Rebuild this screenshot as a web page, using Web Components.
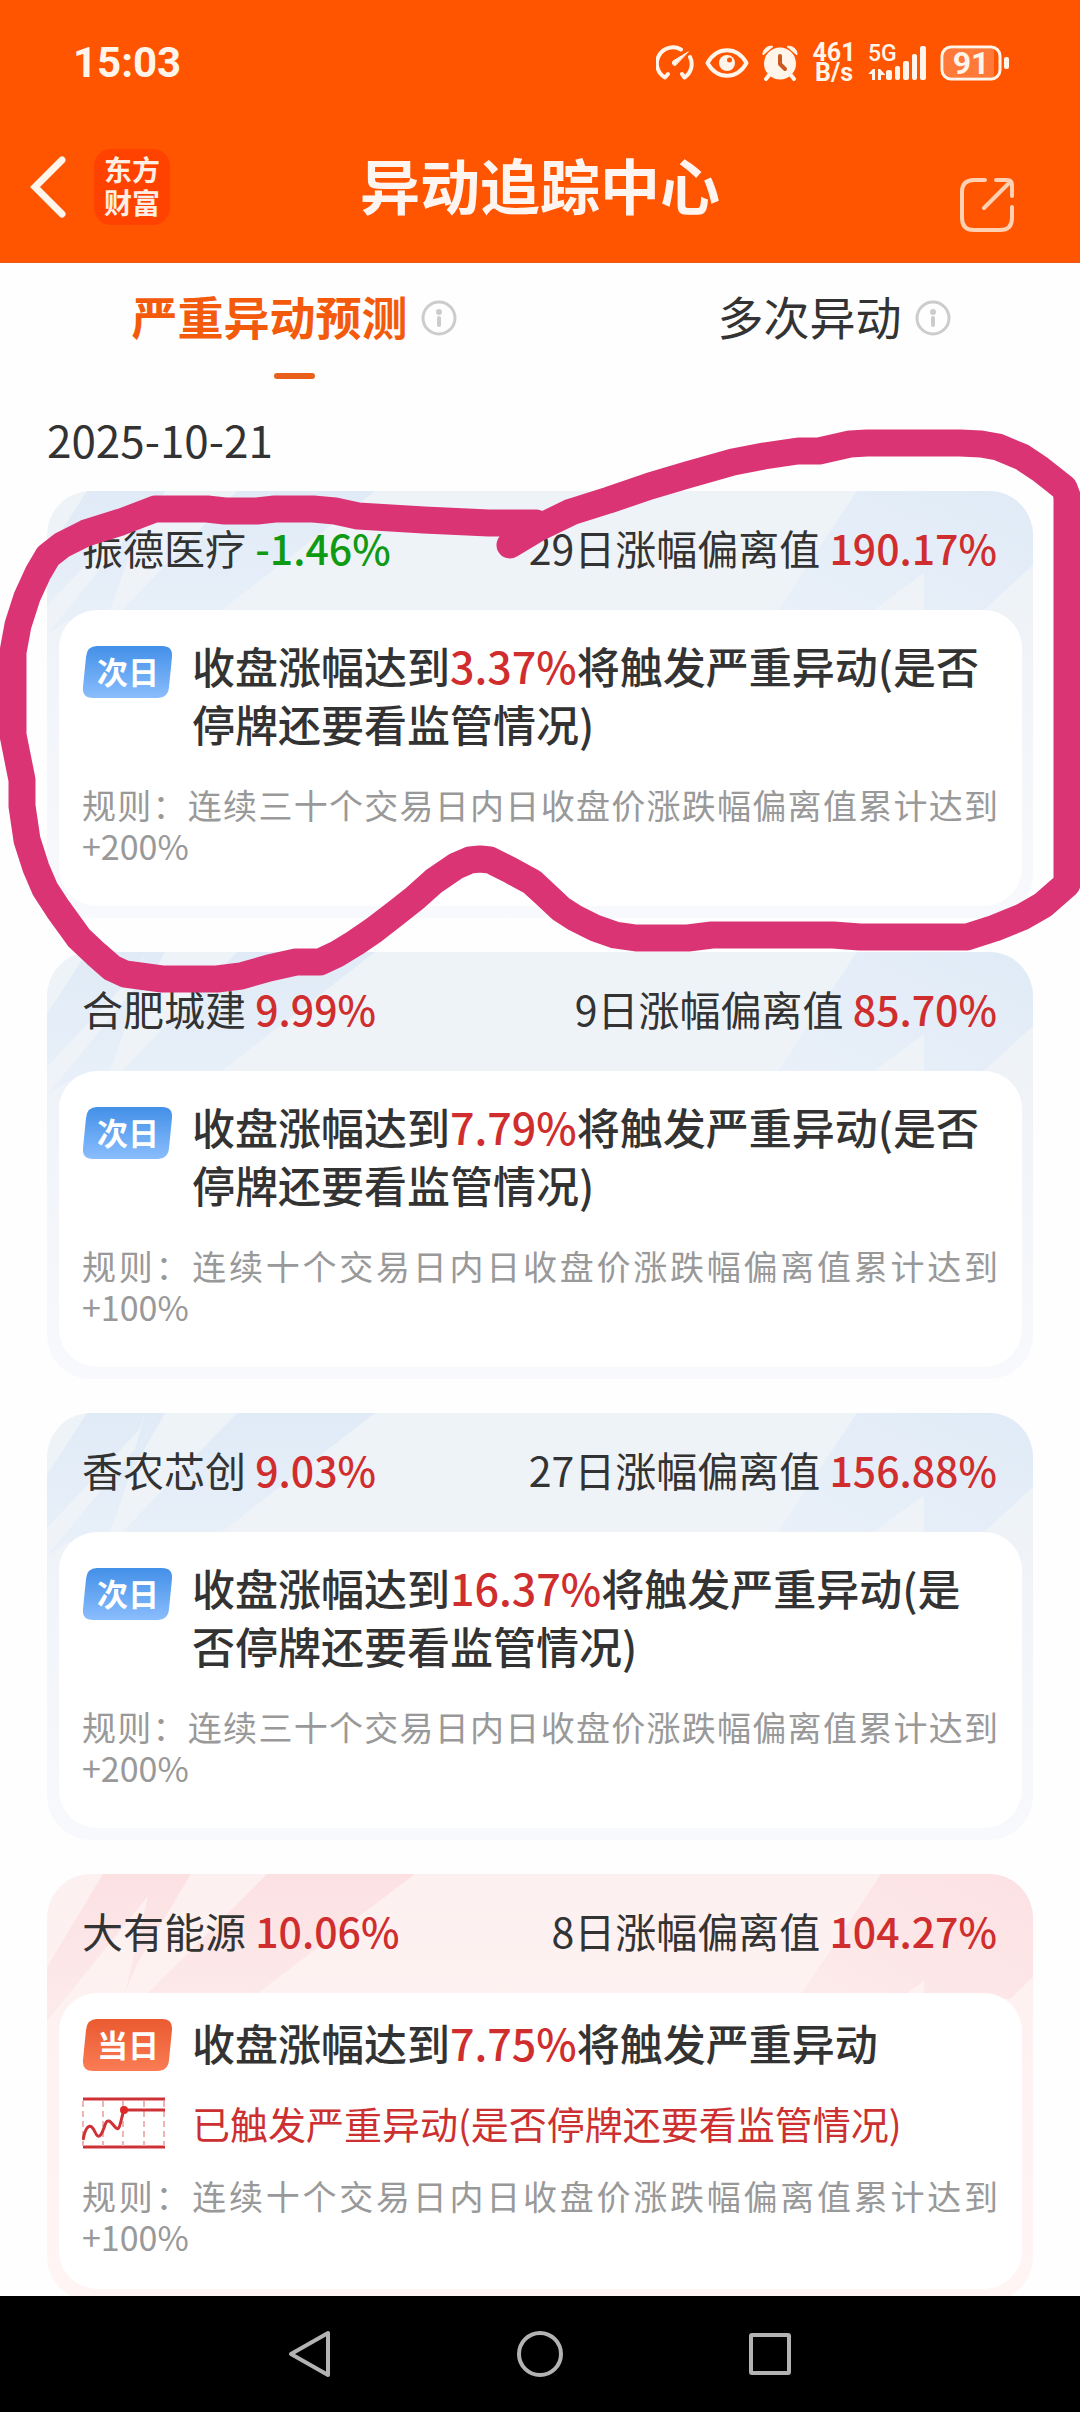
<!DOCTYPE html>
<html lang="zh-CN">
<head>
<meta charset="utf-8">
<meta name="viewport" content="width=device-width">
<title>异动追踪中心</title>
<style>
body { margin: 0; background: #fefefe; color: #333; font-family: "Noto Sans CJK SC", sans-serif; }
</style>
</head>
<body>
<app-screen>
  <status-bar slot="top"></status-bar>
  <title-bar slot="top">异动追踪中心</title-bar>
  <tab-strip>
    <tab-item selected>严重异动预测</tab-item>
    <tab-item>多次异动</tab-item>
  </tab-strip>
  <alert-list date="2025-10-21">
    <stock-alert>
      <span slot="name">振德医疗 <rate-value trend="down">-1.46%</rate-value></span>
      <span slot="deviation">29日涨幅偏离值 <rate-value>190.17%</rate-value></span>
      <day-badge slot="badge">次日</day-badge>
      <span slot="headline">收盘涨幅达到<rate-value>3.37%</rate-value>将触发严重异动(是否停牌还要看监管情况)</span>
      规则：连续三十个交易日内日收盘价涨跌幅偏离值累计达到+200%
    </stock-alert>
    <stock-alert>
      <span slot="name">合肥城建 <rate-value>9.99%</rate-value></span>
      <span slot="deviation">9日涨幅偏离值 <rate-value>85.70%</rate-value></span>
      <day-badge slot="badge">次日</day-badge>
      <span slot="headline">收盘涨幅达到<rate-value>7.79%</rate-value>将触发严重异动(是否停牌还要看监管情况)</span>
      规则：连续十个交易日内日收盘价涨跌幅偏离值累计达到+100%
    </stock-alert>
    <stock-alert>
      <span slot="name">香农芯创 <rate-value>9.03%</rate-value></span>
      <span slot="deviation">27日涨幅偏离值 <rate-value>156.88%</rate-value></span>
      <day-badge slot="badge">次日</day-badge>
      <span slot="headline">收盘涨幅达到<rate-value>16.37%</rate-value>将触发严重异动(是否停牌还要看监管情况)</span>
      规则：连续三十个交易日内日收盘价涨跌幅偏离值累计达到+200%
    </stock-alert>
    <stock-alert triggered>
      <span slot="name">大有能源 <rate-value>10.06%</rate-value></span>
      <span slot="deviation">8日涨幅偏离值 <rate-value>104.27%</rate-value></span>
      <day-badge slot="badge" today>当日</day-badge>
      <span slot="headline">收盘涨幅达到<rate-value>7.75%</rate-value>将触发严重异动</span>
      <span slot="notice">已触发严重异动(是否停牌还要看监管情况)</span>
      规则：连续十个交易日内日收盘价涨跌幅偏离值累计达到+100%
    </stock-alert>
  </alert-list>
  <pen-mark slot="overlay"></pen-mark>
  <system-nav slot="bottom"></system-nav>
</app-screen>

<script>
const BASE = `<style>
  :host { display: block; }
  *, :host { box-sizing: border-box; }
  button { margin: 0; padding: 0; border: 0; background: none; color: inherit; font: inherit; cursor: pointer; }
  svg { display: block; }
</style>`;

function component(name, render) {
  customElements.define(name, class extends HTMLElement {
    constructor() {
      super();
      this.attachShadow({ mode: 'open' });
    }
    connectedCallback() {
      this.shadowRoot.innerHTML = BASE + render(this);
    }
  });
}

component('app-screen', () => `<style>
  :host { position: relative; display: flex; flex-direction: column; height: 100vh; overflow: hidden; }
  main { flex: 1; min-height: 0; overflow: hidden; }
</style>
<slot name="top"></slot><main><slot></slot></main><slot name="overlay"></slot><slot name="bottom"></slot>`);

component('status-bar', () => `<style>
  :host { display: flex; align-items: center; justify-content: space-between; height: 126px; padding: 0 70px 0 73px; background: #ff5500; color: #fff5ea; font-family: Roboto, sans-serif; font-weight: 700; }
  time { font-size: 42px; line-height: 48px; }
  .icons { display: flex; align-items: center; height: 40px; }
  .speed { width: 44px; margin: 0 12px 0 14px; font-size: 25px; line-height: 20px; text-align: center; }
  .cell { display: grid; margin-right: 12px; }
  .cell > * { grid-area: 1 / 1; }
  .cell span { font-size: 23px; line-height: 18px; font-weight: 500; }
  .battery { display: grid; }
  .battery > * { grid-area: 1 / 1; }
  .battery span { width: 62px; text-align: center; font-size: 32px; line-height: 36px; }
  .eye { margin: 0 13px 0 11px; }
</style>
<time>15:03</time>
<div class="icons">
  <svg width="38" height="36" viewBox="0 0 38 36" fill="none" stroke="#fff5ea" stroke-width="4" stroke-linecap="round" stroke-linejoin="round">
    <path d="M25 4.500A16 16 0 0 0 9 32.500L12 29M34 12A16 16 0 0 1 28.500 32.500L26 29"/>
    <path d="M32 7L17 16Q15 20 19 20.500Z" fill="#fff5ea" stroke-width="1"/>
  </svg>
  <svg class="eye" width="44" height="32" viewBox="0 0 44 32">
    <path d="M2.500 16C12-1 32-1 41.500 16C32 33 12 33 2.500 16Z" fill="none" stroke="#fff5ea" stroke-width="4" stroke-linejoin="round"/>
    <circle cx="22" cy="16" r="8" fill="#fff5ea"/><circle cx="24.500" cy="13" r="2.500" fill="#ff5500"/>
  </svg>
  <svg width="36" height="36" viewBox="0 0 36 36">
    <path d="M1 10A8 8 0 0 1 11 1.500ZM35 10A8 8 0 0 0 25 1.500Z" fill="#fff5ea" stroke="#fff5ea" stroke-width="1" stroke-linejoin="round"/>
    <circle cx="18" cy="18.500" r="17" fill="#ff5500"/><circle cx="18" cy="18.500" r="16" fill="#fff5ea"/>
    <path d="M8 29L4 34M28 29L32 34" stroke="#fff5ea" stroke-width="4" stroke-linecap="round"/>
    <path d="M18 11V19L23 24" fill="none" stroke="#c85a20" stroke-width="4" stroke-linecap="round" stroke-linejoin="round"/>
  </svg>
  <div class="speed">461<br>B/s</div>
  <div class="cell">
    <span>5G</span>
    <svg width="60" height="36" viewBox="0 0 60 36" fill="#fff5ea">
      <path d="M0 29L5 24H7V35H4V29ZM10 24H12L17 29.500V30H13V35H10Z"/>
      <rect x="18" y="25" width="6" height="10" rx="2"/><rect x="27" y="21" width="5" height="14" rx="2"/><rect x="35" y="16" width="6" height="19" rx="2"/><rect x="44" y="9" width="5" height="26" rx="2"/><rect x="52" y="1" width="6" height="34" rx="2"/>
    </svg>
  </div>
  <div class="battery">
    <svg width="70" height="36" viewBox="0 0 70 36">
      <path d="M10 4H54V32H10Q4 32 4 26V10Q4 4 10 4Z" fill="#ff7a38"/>
      <rect x="2" y="2" width="58" height="32" rx="9" fill="none" stroke="#fff5ea" stroke-width="3"/>
      <rect x="64" y="12" width="5" height="12" rx="2" fill="#fff5ea"/>
    </svg>
    <span>91</span>
  </div>
</div>`);

component('title-bar', () => `<style>
  :host { display: grid; grid-template-columns: 1fr auto 1fr; align-items: center; height: 137px; padding: 0 29px 15px; background: #ff5500; border-bottom: 1px solid #e85a14; color: #fff5f0; }
  .left { display: flex; align-items: center; gap: 28px; }
  .logo { width: 76px; height: 76px; padding-top: 4px; border-radius: 17px; background: #ff4200; color: #ffeee4; font-size: 28px; line-height: 33px; font-weight: 700; text-align: center; }
  h1 { margin: 0; padding-bottom: 6px; font-size: 60px; line-height: 80px; font-weight: 700; }
  .share { justify-self: end; align-self: end; margin: 0 37px 14px 0; }
</style>
<div class="left">
  <button aria-label="返回"><svg width="37" height="64" viewBox="0 0 37 64" fill="none" stroke="#fff5ea" stroke-width="7" stroke-linecap="round" stroke-linejoin="miter"><path d="M33 5L6 32L33 59"/></svg></button>
  <div class="logo">东方<br>财富</div>
</div>
<h1><slot></slot></h1>
<button class="share" aria-label="分享"><svg width="54" height="56" viewBox="0 0 54 56" fill="none" stroke="#ffd0b2" stroke-width="4" stroke-linecap="round" stroke-linejoin="round">
  <path d="M25 3H14Q2 3 2 15V41Q2 53 14 53H40Q52 53 52 41V30"/><path d="M36 3H47Q52 3 52 8V19M50 5L24 31"/>
</svg></button>`);

component('tab-strip', () => `<style>:host { display: flex; padding-top: 26px; }</style><slot></slot>`);

component('tab-item', el => `<style>
  :host { flex: 1; padding-left: 48px; }
  :host([selected]) .label { color: #f45a0c; font-weight: 700; }
  .row { display: flex; justify-content: center; align-items: center; gap: 13px; }
  .label { padding-bottom: 6px; font-size: 46px; line-height: 52px; }
  .bar { width: 41px; height: 6px; margin: 26px auto 0; border-radius: 3px; }
  :host([selected]) .bar { background: #e8601a; }
</style>
<div class="row">
  <button class="label" aria-pressed="${el.hasAttribute('selected')}"><slot></slot></button>
  <button aria-label="说明"><svg width="36" height="36" viewBox="0 0 36 36"><circle cx="18" cy="18" r="16" fill="none" stroke="#ccc" stroke-width="3"/><circle cx="18" cy="12" r="3" fill="#ccc"/><rect x="16" y="16" width="4" height="11" rx="2" fill="#ccc"/></svg></button>
</div>
<div class="bar"></div>`);

component('alert-list', el => `<style>
  :host { padding: 30px 47px 0; }
  time { display: block; margin-bottom: 22px; font-size: 44px; line-height: 60px; }
  .cards { display: flex; flex-direction: column; gap: 34px; }
</style>
<time>${el.getAttribute('date')}</time>
<div class="cards"><slot></slot></div>`);

component('rate-value', () => `<style>
  :host { display: inline; color: #d02e2e; font-weight: 500; }
  :host([trend="down"]) { color: #0f9a14; }
</style><slot></slot>`);

component('day-badge', () => `<style>
  :host { display: grid; width: 92px; height: 52px; flex: none; --from: #4390e8; --to: #8abdfd; }
  :host([today]) { --from: #ea5a30; --to: #fa7c54; }
  svg, span { grid-area: 1 / 1; }
  span { color: #fff; font-size: 31px; line-height: 50px; font-weight: 700; text-align: center; }
</style>
<svg width="92" height="52" viewBox="0 0 92 52">
  <defs><linearGradient id="g" x2="0" y2="1"><stop style="stop-color: var(--from)"/><stop offset="1" style="stop-color: var(--to)"/></linearGradient></defs>
  <path d="M15 0H80Q91 0 90 11L87 41Q86 52 75 52H11Q0 52 1 41L4 11Q5 0 15 0Z" fill="url(#g)"/>
</svg>
<span><slot></slot></span>`);

const BLUE = {
  left: '<path d="M40 0H98L92 17L0 115V62ZM98 0H118L84 60L63 119L20 130L0 143L88 36ZM190 0H328L175 119H75Z"/>',
  right: '<path d="M84 0H260V74L211 119H151V82L101 119H5Z"/>'
};
const RED = {
  left: '<path d="M56 0H144L90 90L78 119L101 22L0 147V93ZM220 0H368L211 119H101Z"/>',
  right: '<path d="M108 0H260V103L237 125H151V107L134 119H29Z"/>'
};

component('stock-alert', el => {
  const hit = el.hasAttribute('triggered');
  const art = hit ? RED : BLUE;
  return `<style>
  :host { display: grid; grid-template-columns: 100%; border-radius: 44px; overflow: hidden; background: linear-gradient(#eef3f8, #eff3f8 30%, #f8f9fc); --near: #e9f0f9; --far: #e0ebf7; }
  :host([triggered]) { background: linear-gradient(#fdf0f0, #fff5f4); --near: #fdebeb; --far: #fce1e3; }
  .art, .card { grid-area: 1 / 1; }
  .art { display: flex; justify-content: space-between; }
  .card { z-index: 1; padding: 0 11px 12px 12px; }
  header { display: flex; justify-content: space-between; height: 119px; padding: 0 25px 0 23px; font-size: 41px; line-height: 112px; white-space: nowrap; }
  .body { min-height: 296px; padding: 26px 24px 0 23px; border-radius: 38px; background: #fff; }
  .lead { display: flex; gap: 18px; }
  .lead slot[name=badge]::slotted(*) { margin-top: 10px; }
  .headline { flex: 1; font-size: 43px; line-height: 58px; font-weight: 500; }
  .notice { display: flex; align-items: center; gap: 27px; margin-top: 24px; color: #cc3030; font-size: 38px; line-height: 56px; }
  .rule { margin: 32px 0 0; color: #999; font-size: 34px; line-height: 41px; text-align: justify; }
  :host([triggered]) .body { padding-top: 20px; }
  :host([triggered]) .lead slot[name=badge]::slotted(*) { margin-top: 6px; }
  :host([triggered]) .rule { margin-top: 24px; }
</style>
<div class="art">
  <svg width="380" height="150" viewBox="0 0 380 150"><defs><linearGradient id="l" y1="1" x2="0" y2="0"><stop style="stop-color: var(--near)"/><stop offset="1" style="stop-color: var(--far)"/></linearGradient></defs><g fill="url(#l)">${art.left}</g></svg>
  <svg width="260" height="150" viewBox="0 0 260 150"><defs><linearGradient id="r" y1="1" x2="1" y2="0"><stop style="stop-color: var(--near)"/><stop offset="1" style="stop-color: var(--far)"/></linearGradient></defs><g fill="url(#r)">${art.right}</g></svg>
</div>
<div class="card">
  <header><slot name="name"></slot><slot name="deviation"></slot></header>
  <div class="body">
    <div class="lead"><slot name="badge"></slot><div class="headline"><slot name="headline"></slot></div></div>
    ${hit ? `<div class="notice">
      <svg width="83" height="54" viewBox="0 0 83 54" fill="none" stroke="#cf3236" stroke-width="3">
        <path d="M1 3H83M1 51H83"/><path d="M1 5V50M21 5V50M41 5V50M62 5V50M82 5V50" stroke="#eeb4b4" stroke-width="2" stroke-dasharray="6 4"/>
        <path d="M1 44C4 28 9 27 13 36S20 38 23 29S30 28 34 32S39 22 42 14H83"/><circle cx="42" cy="14" r="4" fill="#e02828" stroke="none"/>
      </svg>
      <slot name="notice"></slot></div>` : ''}
    <p class="rule"><slot></slot></p>
  </div>
</div>`;
});

/* Freehand highlighter loop laid over the first card. */
component('pen-mark', () => `<style>
  :host { position: absolute; z-index: 2; inset: 0 0 auto; pointer-events: none; }
  svg { width: 100%; }
</style>
<svg viewBox="0 0 1080 1000" fill="none" stroke="#db3474" stroke-width="27" stroke-linecap="round" stroke-linejoin="round">
  <path d="M510 545L540 527L571 512L609 500L650 486L687 475L733 462L764 456L798 451H819L850 444L867 443H960L981 444L998 447L1022 457L1040 469L1054 480L1064 488L1067 496V884L1043 905L1022 917L995 928L967 937H860L833 935H712L688 938H636L615 935L595 928L575 918L561 909L545 894L532 882L510 870L490 860L480 859L470 860L456 866L434 881L415 898L396 913L374 930L355 943L337 954L320 962H296L269 968L241 976L217 979H162L125 974L112 968L96 954L79 938L58 909L45 889L36 868L27 840L22 806V780L19 765L13 735V652L18 625L27 597L38 573L48 556L62 545L86 533L121 522L155 509H207L225 511H257L275 509H313L335 511L358 516L424 520L489 523H536"/>
</svg>`);

component('system-nav', () => `<style>
  :host { display: flex; flex: none; height: 116px; padding: 0 18%; background: #000; }
  button { flex: 1; display: grid; place-items: center; }
</style>
<button aria-label="返回"><svg width="46" height="50" viewBox="0 0 46 50" fill="none" stroke="#b3b3b3" stroke-width="4" stroke-linejoin="round"><path d="M41 4V46L4 25Z"/></svg></button>
<button aria-label="主页"><svg width="48" height="50" viewBox="0 0 48 50" fill="none" stroke="#b3b3b3" stroke-width="4"><ellipse cx="24" cy="25" rx="21" ry="21"/></svg></button>
<button aria-label="最近任务"><svg width="44" height="46" viewBox="0 0 44 46" fill="none" stroke="#b3b3b3" stroke-width="4" stroke-linejoin="round"><rect x="3" y="4" width="38" height="38" rx="1"/></svg></button>`);
</script>
</body>
</html>
